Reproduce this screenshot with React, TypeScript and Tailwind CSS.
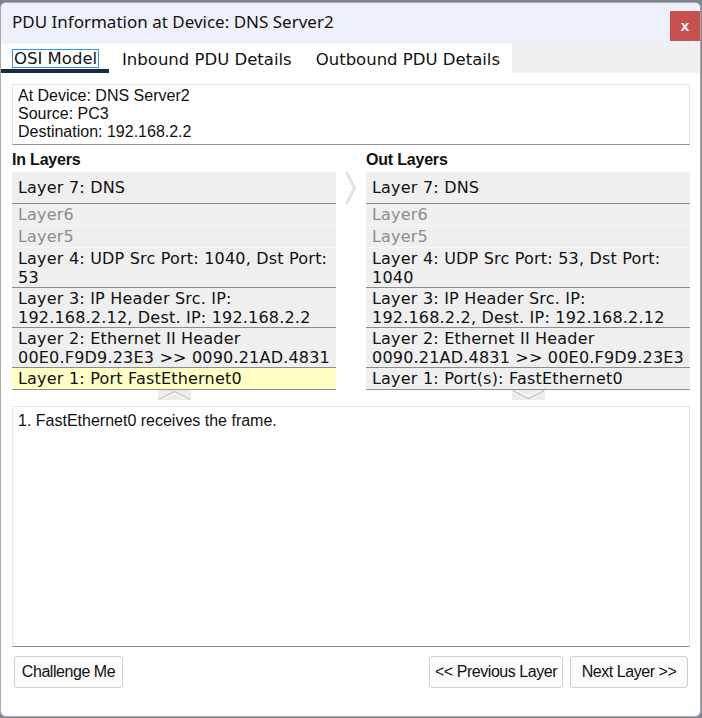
import React from "react";

const layerFont = { fontFamily: '"DejaVu Sans", sans-serif' };

function Row({
  children,
  h,
  border = true,
  dim = false,
  yellow = false,
}: {
  children: React.ReactNode;
  h: string;
  border?: boolean;
  dim?: boolean;
  yellow?: boolean;
}) {
  return (
    <div
      className={
        h +
        " flex flex-col justify-center pl-[6px] text-[16px] leading-[19px] tracking-[0.2px] whitespace-nowrap " +
        (yellow ? "bg-[#ffffc6] " : "bg-[#efefef] ") +
        (border ? "border-b border-[#8c8c8c] " : "border-b border-[#f7f7f7] ") +
        (dim ? "text-[#8d8d8d]" : "text-[#111]")
      }
      style={layerFont}
    >
      {children}
    </div>
  );
}

function Column({
  title,
  rows,
  arrow,
}: {
  title: string;
  rows: { l4: React.ReactNode; l3: React.ReactNode; l2: React.ReactNode; l1: string; y: boolean };
  arrow: "up" | "down";
}) {
  return (
    <div className="flex flex-col w-[324px]">
      <div className="h-[24px] flex items-center font-bold text-[16px] tracking-[-0.2px] text-[#111]">{title}</div>
      <Row h="h-[32px]">Layer 7: DNS</Row>
      <Row h="h-[22px]" border={false} dim>
        Layer6
      </Row>
      <Row h="h-[22px]" border={false} dim>
        Layer5
      </Row>
      <Row h="h-[40px]">{rows.l4}</Row>
      <Row h="h-[40px]">{rows.l3}</Row>
      <Row h="h-[40px]">{rows.l2}</Row>
      <Row h="h-[22px]" yellow={rows.y}>
        {rows.l1}
      </Row>
      <div className="h-[10px] flex justify-center">
        <div className="w-[33px] h-[10px] bg-[#ececec]">
          {arrow === "up" ? (
            <svg width="33" height="10" viewBox="0 0 33 10">
              <polyline points="1,9.5 16.5,1.5 32,9.5" fill="none" stroke="#c4c4c4" strokeWidth="1.2" />
              <polyline points="4,9.5 16.5,3.5 29,9.5" fill="none" stroke="#fafafa" strokeWidth="1.2" />
            </svg>
          ) : (
            <svg width="33" height="10" viewBox="0 0 33 10">
              <polyline points="1,0.5 16.5,8.5 32,0.5" fill="none" stroke="#c4c4c4" strokeWidth="1.2" />
              <polyline points="4,0.5 16.5,6.5 29,0.5" fill="none" stroke="#fafafa" strokeWidth="1.2" />
            </svg>
          )}
        </div>
      </div>
    </div>
  );
}

export default function App() {
  const sans = { fontFamily: '"Liberation Sans", Arial, sans-serif' };
  const btn =
    "h-[32px] border border-[#cfcfcf] rounded-[3px] bg-[#fbfbfb] text-[16px] text-[#111] flex items-center justify-center tracking-[-0.45px]";
  const btnFont = { fontFamily: '"Liberation Sans Narrow", "Liberation Sans", Arial, sans-serif' };
  return (
    <div className="w-[702px] h-[718px] bg-[#7d8794] overflow-hidden pt-[2px]" style={sans}>
      <div className="w-[701px] h-[715px] bg-white border border-[#a9a9a9] rounded-[6px] overflow-hidden flex flex-col">
        {/* Title bar */}
        <div className="h-[41px] bg-[#eef1fa] flex items-start justify-between shrink-0">
          <div
            className="pl-[11px] pt-[6px] text-[17px] text-[#111]"
            style={{ fontFamily: '"Noto Sans", "Open Sans", sans-serif' }}
          >
            PDU Information at Device: DNS Server2
          </div>
          <div className="mt-[8px] w-[30px] h-[30px] bg-[#c75050] flex items-center justify-center text-white font-bold text-[15px] leading-none pb-[2px]">
            x
          </div>
        </div>
        {/* Tabs */}
        <div
          className="h-[29px] flex shrink-0 text-[16.5px] text-[#111]"
          style={{ fontFamily: '"DejaVu Sans", sans-serif' }}
        >
          <div className="w-[108px] flex flex-col items-start justify-end">
            <div className="ml-[11px] border border-[#2c9be0] px-[1px] leading-[17px] h-[19px] mb-[1px]">OSI Model</div>
            <div className="w-[108px] h-[4px] bg-[#15294a]" />
          </div>
          <div className="pl-[13px] pr-[12px] flex items-center pt-[3px]">Inbound PDU Details</div>
          <div className="pl-[12px] pr-[12px] flex items-center pt-[3px]">Outbound PDU Details</div>
          <div className="flex-1 bg-[#f0f0f0]" />
        </div>
        {/* Content */}
        <div className="flex-1 flex flex-col pl-[11px] pr-[10px] pt-[11px]">
          <div className="h-[61px] border border-[#e3e3e3] border-b-[#8c8c8c] pl-[5px] pt-[2px] text-[16px] leading-[18px] text-[#111]">
            <div>At Device: DNS Server2</div>
            <div>Source: PC3</div>
            <div>Destination: 192.168.2.2</div>
          </div>
          <div className="flex mt-[3px]">
            <Column
              title="In Layers"
              arrow="up"
              rows={{
                l4: (
                  <>
                    <div>Layer 4: UDP Src Port: 1040, Dst Port:</div>
                    <div>53</div>
                  </>
                ),
                l3: (
                  <>
                    <div>Layer 3: IP Header Src. IP:</div>
                    <div>192.168.2.12, Dest. IP: 192.168.2.2</div>
                  </>
                ),
                l2: (
                  <>
                    <div>Layer 2: Ethernet II Header</div>
                    <div>00E0.F9D9.23E3 &gt;&gt; 0090.21AD.4831</div>
                  </>
                ),
                l1: "Layer 1: Port FastEthernet0",
                y: true,
              }}
            />
            <div className="w-[30px] flex justify-center pt-[24px]">
              <svg width="12" height="32" viewBox="0 0 12 32">
                <polygon points="1,1 3,1 10.5,16 3,31 1,31 8.5,16" fill="#f7f7f7" stroke="#d2d2d2" strokeWidth="1" />
              </svg>
            </div>
            <Column
              title="Out Layers"
              arrow="down"
              rows={{
                l4: (
                  <>
                    <div>Layer 4: UDP Src Port: 53, Dst Port:</div>
                    <div>1040</div>
                  </>
                ),
                l3: (
                  <>
                    <div>Layer 3: IP Header Src. IP:</div>
                    <div>192.168.2.2, Dest. IP: 192.168.2.12</div>
                  </>
                ),
                l2: (
                  <>
                    <div>Layer 2: Ethernet II Header</div>
                    <div>0090.21AD.4831 &gt;&gt; 00E0.F9D9.23E3</div>
                  </>
                ),
                l1: "Layer 1: Port(s): FastEthernet0",
                y: false,
              }}
            />
          </div>
          <div className="mt-[6px] h-[241px] border border-[#e6e6e6] border-b-[#8c8c8c] pl-[5px] pt-[5px] text-[16px] leading-[18px] text-[#111]">
            1. FastEthernet0 receives the frame.
          </div>
          <div className="flex mt-[9px] px-[2px]">
            <div className={btn + " w-[109px]"} style={btnFont}>
              Challenge Me
            </div>
            <div className="flex-1" />
            <div className={btn + " w-[134px]"} style={btnFont}>
              &lt;&lt; Previous Layer
            </div>
            <div className={btn + " w-[118px] ml-[7px]"} style={btnFont}>
              Next Layer &gt;&gt;
            </div>
          </div>
        </div>
      </div>
    </div>
  );
}
